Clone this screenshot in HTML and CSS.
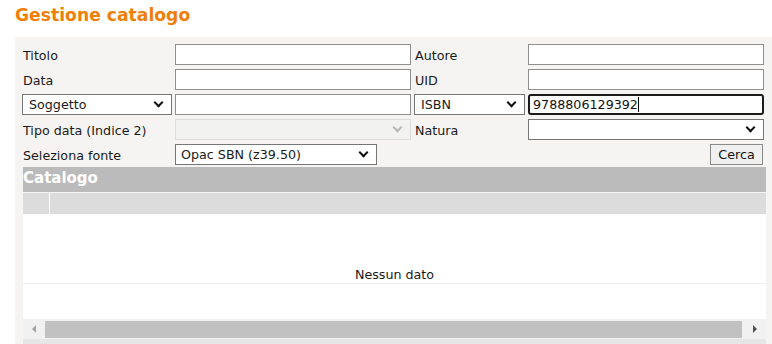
FILE: index.html
```html
<!DOCTYPE html>
<html lang="it">

<head>
    <meta charset="UTF-8">
    <title>Gestione catalogo</title>
    <link rel="stylesheet" href="styles.css">
</head>

<body>
    <h1 class="page_title">Gestione catalogo</h1>

    <div class="panel">
        <div class="search_form">
            <label class="lbl">Titolo</label>
            <input type="text" class="field">
            <label class="lbl">Autore</label>
            <input type="text" class="field">

            <label class="lbl">Data</label>
            <input type="text" class="field">
            <label class="lbl">UID</label>
            <input type="text" class="field">

            <div class="select">Soggetto<span class="chev"></span></div>
            <input type="text" class="field">
            <div class="select">ISBN<span class="chev"></span></div>
            <div class="field focused">9788806129392<span class="caret"></span></div>

            <label class="lbl">Tipo data (Indice 2)</label>
            <div class="select disabled"><span class="chev"></span></div>
            <label class="lbl">Natura</label>
            <div class="select plain"><span class="chev"></span></div>

            <label class="lbl">Seleziona fonte</label>
            <div class="select source">Opac SBN (z39.50)<span class="chev"></span></div>
            <button class="btn_cerca">Cerca</button>
        </div>

        <div class="catalog">
            <div class="catalog_head">Catalogo</div>
            <div class="grid_head">
                <div class="grid_cell first"></div>
                <div class="grid_cell"></div>
            </div>
            <div class="grid_body">
                <div class="empty_row">Nessun dato</div>
            </div>
            <div class="hscroll">
                <span class="arrow left"></span>
                <div class="thumb"></div>
                <span class="arrow right"></span>
            </div>
            <div class="under_scroll"></div>
        </div>
    </div>
</body>

</html>
```

FILE: styles.css
```css
* {
    margin: 0;
    padding: 0;
    box-sizing: border-box;
}

body {
    font-family: 'DejaVu Sans', Verdana, sans-serif;
    font-size: 12.7px;
    color: #1a1a1a;
    background-color: #ffffff;
    overflow: hidden;
}

.page_title {
    height: 37px;
    padding: 5px 0 0 15px;
    font-size: 17.2px;
    font-weight: bold;
    color: #f07f09;
}

.panel {
    margin-left: 15px;
    height: 307px;
    background-color: #f5f4f2;
    padding: 7px 0 0 7px;
}

.search_form {
    display: grid;
    grid-template-columns: 150px 236px 111px 236px;
    grid-auto-rows: 21px;
    column-gap: 3px;
    row-gap: 4px;
}

.lbl {
    display: flex;
    align-items: center;
    padding: 1px 0 0 1px;
}

.field {
    height: 21px;
    border: 1px solid #8f8f8f;
    background-color: #ffffff;
    font-family: inherit;
    font-size: 12.7px;
    outline: none;
}

.focused {
    display: flex;
    align-items: center;
    padding-left: 3px;
    border: 2px solid #1b1b1b;
    border-radius: 3px;
    color: #111;
}

.caret {
    display: inline-block;
    width: 1px;
    height: 15px;
    background-color: #000;
}

.select {
    position: relative;
    display: flex;
    align-items: center;
    height: 21px;
    padding-left: 6px;
    border: 1px solid #767676;
    background-color: #ffffff;
}

.select.disabled {
    border-color: #dcdcdc;
    background-color: #f2f2f0;
}

.select.disabled .chev {
    border-color: #b8b8b8;
}

.select.plain,
.select.source {
    padding-left: 5px;
}

.select.source {
    width: 202px;
}

.chev {
    position: absolute;
    right: 9px;
    top: 4px;
    width: 7px;
    height: 7px;
    border-right: 2px solid #111;
    border-bottom: 2px solid #111;
    transform: rotate(45deg);
}

.btn_cerca {
    grid-column: 4;
    justify-self: end;
    width: 53px;
    height: 21px;
    margin-right: 1px;
    border: 1px solid #8a8a8a;
    background-color: #f0f0f0;
    font-family: inherit;
    font-size: 12.7px;
    color: #111;
}

.catalog {
    margin: 2px 0 0 1px;
    width: 743px;
}

.catalog_head {
    height: 25px;
    background-color: #bbbbbb;
    color: #ffffff;
    font-weight: bold;
    font-size: 15px;
    line-height: 23px;
}

.grid_head {
    display: flex;
    height: 21px;
    margin-top: 1px;
    background-color: #dcdcdc;
}

.grid_cell.first {
    width: 27px;
    border-right: 1px solid #ffffff;
}

.grid_body {
    height: 105px;
    background-color: #ffffff;
    padding-top: 52px;
}

.empty_row {
    height: 18px;
    padding-top: 1px;
    text-align: center;
    border-bottom: 1px solid #efefef;
    color: #1a1a1a;
}

.hscroll {
    display: flex;
    align-items: center;
    height: 20px;
    background-color: #f1f1f1;
}

.arrow {
    width: 0;
    height: 0;
    border-top: 4px solid transparent;
    border-bottom: 4px solid transparent;
}

.arrow.left {
    margin: 0 9px 0 9px;
    border-right: 4px solid #a3a3a3;
}

.arrow.right {
    margin: 0 9px 0 11px;
    border-left: 4px solid #505050;
}

.thumb {
    flex: 1;
    height: 17px;
    background-color: #c1c1c1;
}

.under_scroll {
    height: 6px;
    background-color: #e6e6e6;
}
```
